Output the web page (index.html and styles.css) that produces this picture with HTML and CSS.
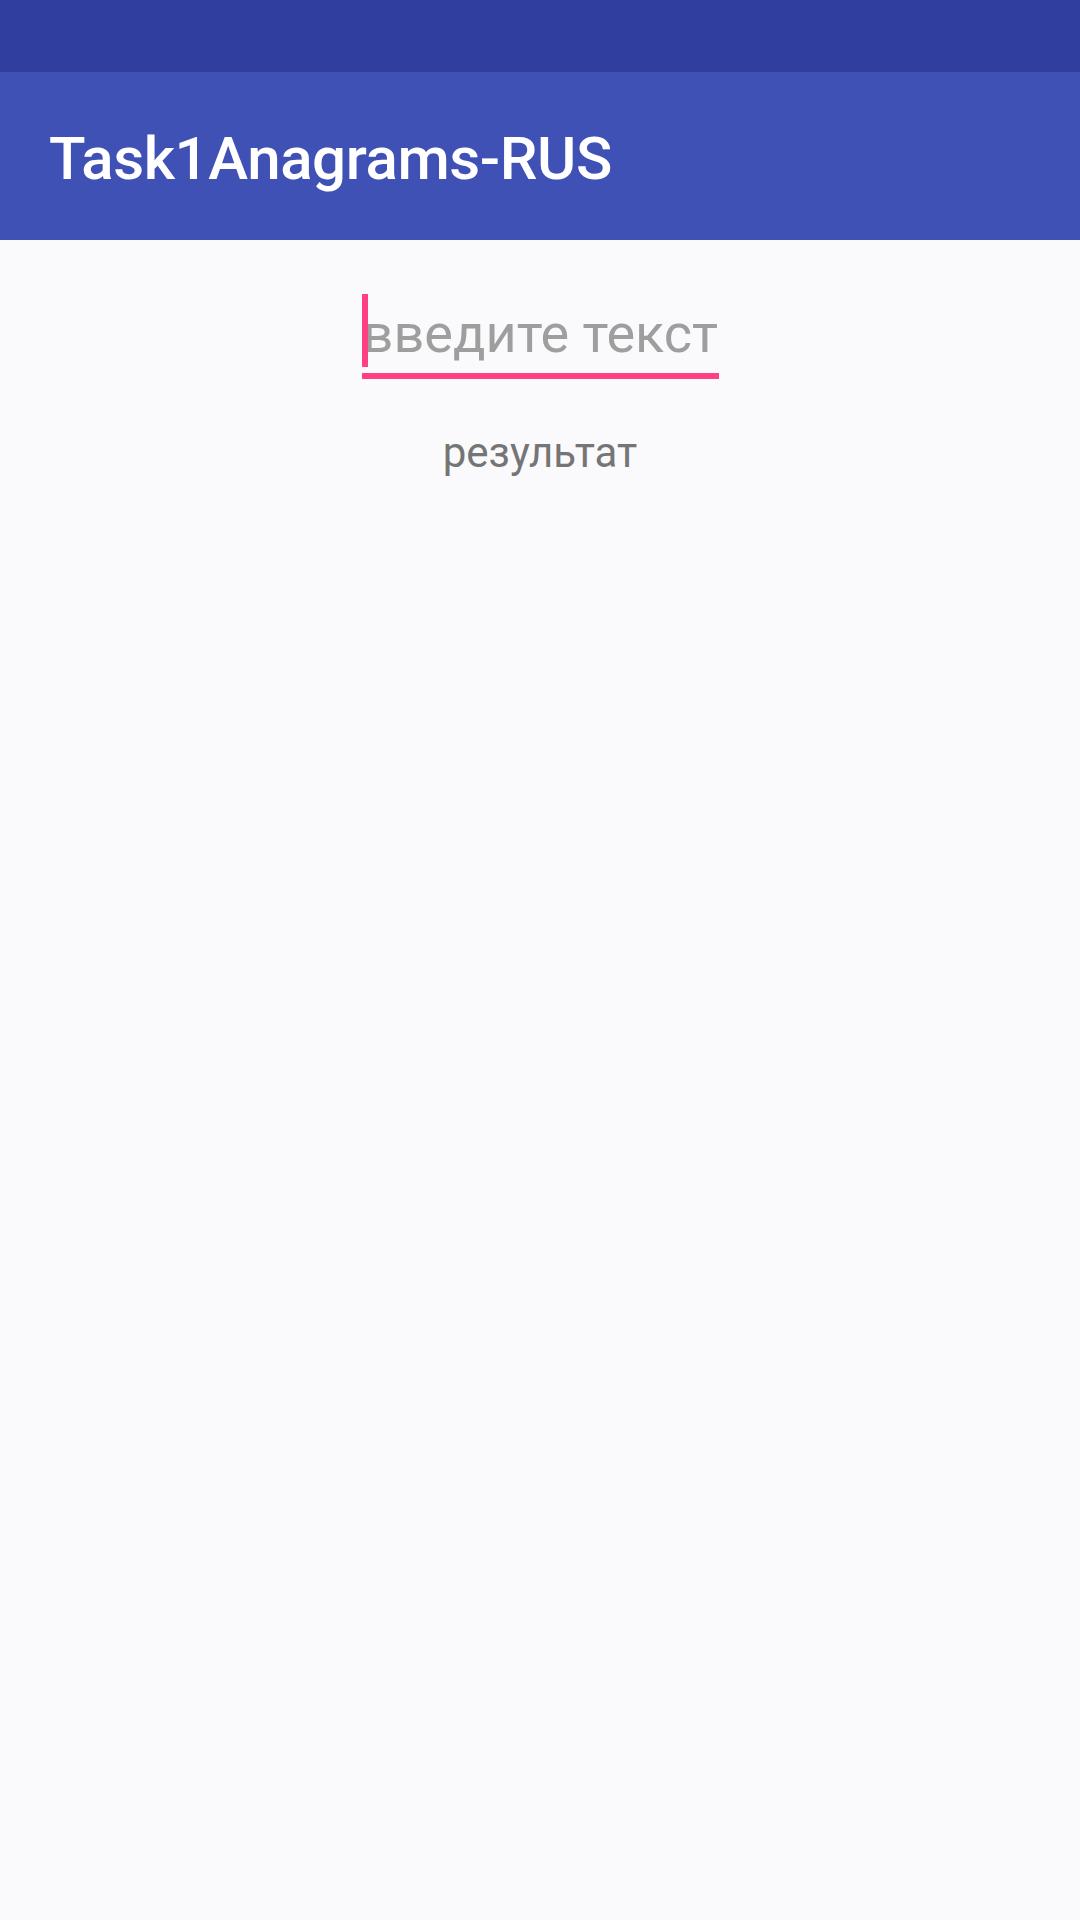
FILE: index.html
```html
<!DOCTYPE html>
<html lang="ru">
<head>
<meta charset="utf-8">
<title>Task1Anagrams-RUS</title>
<link rel="stylesheet" href="styles.css">
</head>
<body>
<div class="status-bar"></div>
<header class="app-bar">
  <h1 class="app-title">Task1Anagrams-RUS</h1>
</header>
<main class="content">
  <div class="field">
    <span class="cursor"></span>
    <span class="hint">введите текст</span>
  </div>
  <div class="result">результат</div>
</main>
</body>
</html>
```
FILE: styles.css
```css
html, body {
  margin: 0;
  padding: 0;
  height: 100%;
}
body {
  background: #fafafc;
  font-family: Roboto, "Noto Sans", sans-serif;
}
.status-bar {
  height: 72px;
  background: #303f9f;
}
.app-bar {
  height: 168px;
  background: #3f51b5;
  display: flex;
  align-items: center;
  padding: 5px 0 0 49px;
  box-sizing: border-box;
}
.app-title {
  margin: 0;
  color: #ffffff;
  font-size: 60px;
  font-weight: 500;
  letter-spacing: -0.4px;
  line-height: normal;
}
.content {
  display: flex;
  flex-direction: column;
  align-items: center;
  padding-top: 62px;
}
.field {
  position: relative;
  width: 357px;
  border-bottom: 6px solid #ff4081;
  padding-bottom: 8px;
}
.cursor {
  position: absolute;
  left: 0;
  top: -8px;
  width: 6px;
  height: 73px;
  background: #ff4081;
}
.hint {
  display: block;
  font-size: 54px;
  line-height: normal;
  color: #9e9e9e;
  padding-left: 1px;
  white-space: nowrap;
}
.result {
  margin-top: 49px;
  font-size: 42px;
  line-height: normal;
  color: #757575;
}
```
